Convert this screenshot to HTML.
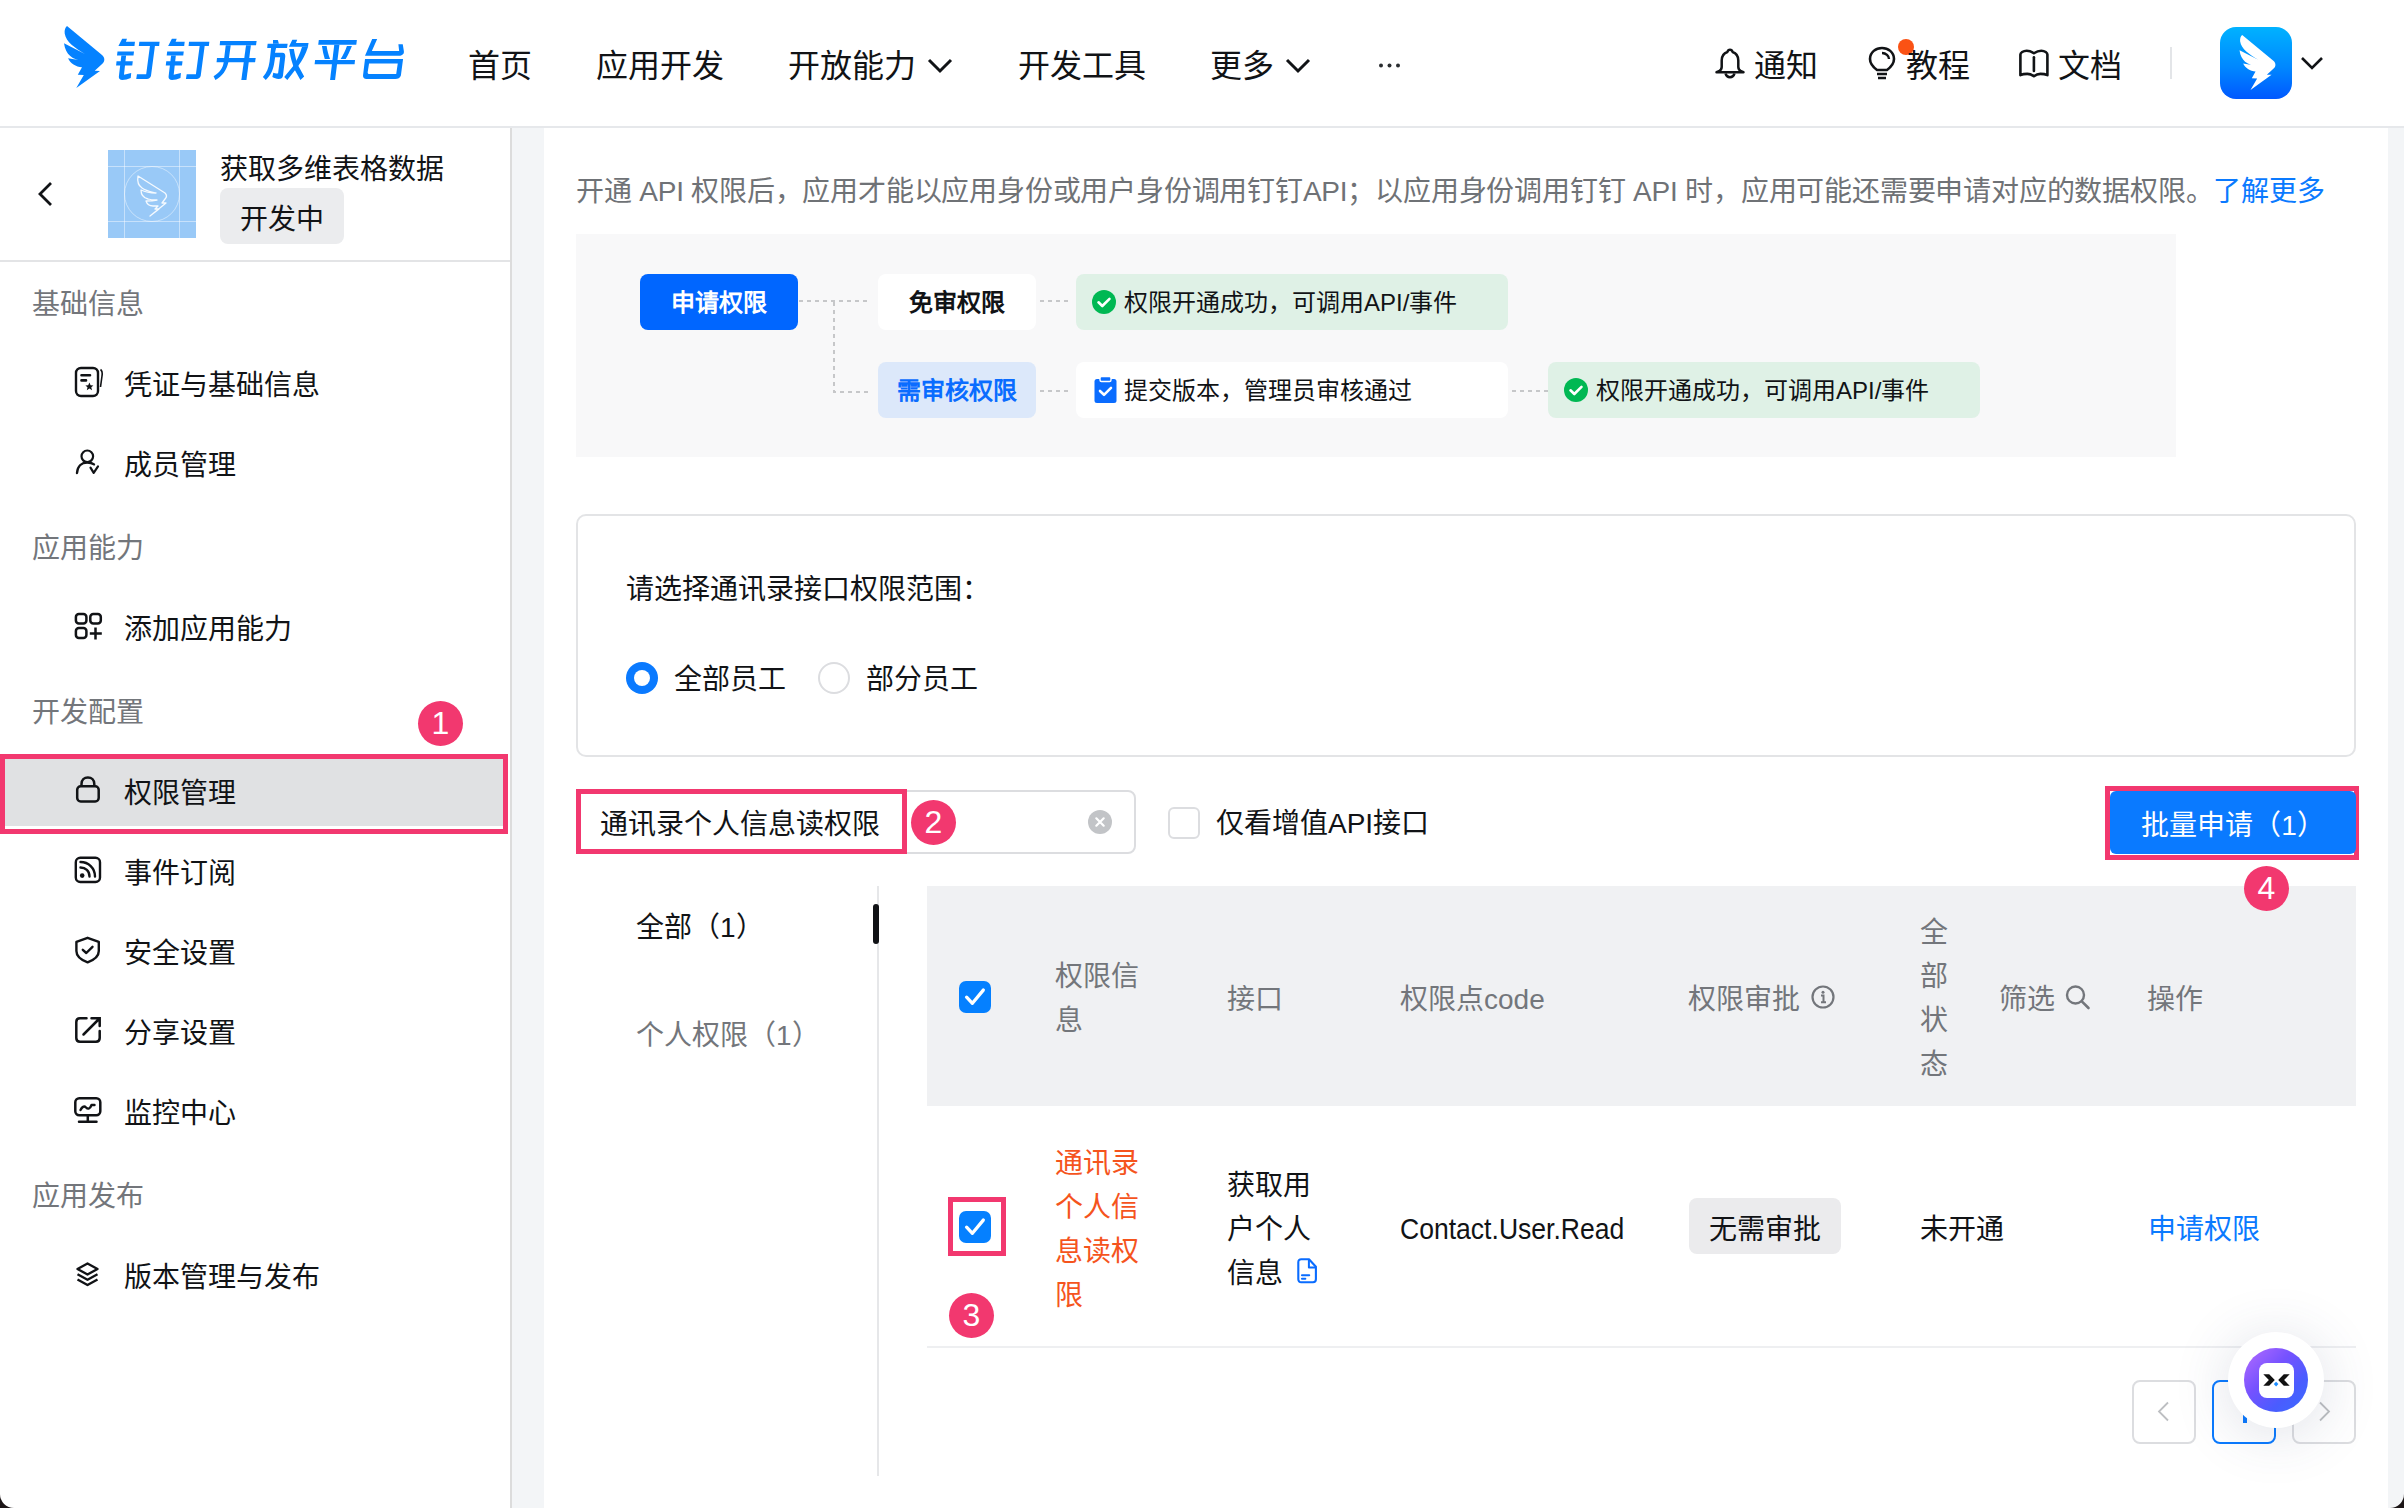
<!DOCTYPE html>
<html lang="zh-CN">
<head>
<meta charset="utf-8">
<style>
html,body{margin:0;padding:0;width:2404px;height:1508px;overflow:hidden;background:#fff;}
body{font-family:"Liberation Sans",sans-serif;color:#111316;position:relative;}
.a{position:absolute;white-space:nowrap;}
.t28{font-size:28px;line-height:46px;}
.t32{font-size:32px;line-height:44px;}
.gray{color:#73767b;}
svg{position:absolute;overflow:visible;}
.fl{font-size:24px;line-height:58px;}
.cbx{width:32px;height:32px;border-radius:7px;background:#0580ff;}
.bdg{width:45px;height:45px;border-radius:50%;background:#f2386f;color:#fff;font-size:32px;line-height:45px;text-align:center;}

</style>
</head>
<body>
<!-- HEADER -->
<div class="a" style="left:0;top:0;width:2404px;height:126px;background:#fff;"></div>
<div class="a" style="left:0;top:126px;width:2404px;height:2px;background:#e6e8eb;"></div>
<!-- logo -->
<svg style="left:0;top:0" width="120" height="100" viewBox="0 0 120 100"><path fill="#0582ff" d="M67 26 L102 55 C104.8 57.3 105.2 61 102.6 63.6 L94.7 70.8 L100 70.9 L76.3 88 L83.8 75 L77.8 74.7 L82 67.2 C76 67 70 63 68.1 58.2 L82.7 60.8 C73 60 65.5 55 64 43.3 L85 53.9 C75 48 66 42 64.7 33.5 C64.3 30 65.3 27.3 67 26 Z"/></svg>
<svg style="left:0;top:0" width="420" height="100" viewBox="0 0 420 100">
<g fill="#0582ff">
<path transform="translate(110 30) scale(0.062395)" d="M135 255 L195 140 L272 140 L255 190 L400 190 L392 255 Z"/>
<path transform="translate(110 30) scale(0.062395)" d="M120 345 L385 345 L377 410 L112 410 Z"/>
<path transform="translate(110 30) scale(0.062395)" d="M105 500 L365 500 L357 570 L97 570 Z"/>
<path transform="translate(110 30) scale(0.062395)" d="M182 410 L258 410 L224 718 L340 688 L332 768 C290 786 235 800 198 800 C160 800 138 778 142 745 Z"/>
<path transform="translate(110 30) scale(0.062395)" d="M470 190 L795 190 L787 258 L462 258 Z"/>
<path transform="translate(110 30) scale(0.062395)" d="M640 258 L720 258 L657 735 C650 765 625 785 590 785 L420 785 L432 710 L580 710 Z"/>
<path transform="translate(110 30) scale(0.062395) translate(797 0)" d="M135 255 L195 140 L272 140 L255 190 L400 190 L392 255 Z"/>
<path transform="translate(110 30) scale(0.062395) translate(797 0)" d="M120 345 L385 345 L377 410 L112 410 Z"/>
<path transform="translate(110 30) scale(0.062395) translate(797 0)" d="M105 500 L365 500 L357 570 L97 570 Z"/>
<path transform="translate(110 30) scale(0.062395) translate(797 0)" d="M182 410 L258 410 L224 718 L340 688 L332 768 C290 786 235 800 198 800 C160 800 138 778 142 745 Z"/>
<path transform="translate(110 30) scale(0.062395) translate(797 0)" d="M470 190 L795 190 L787 258 L462 258 Z"/>
<path transform="translate(110 30) scale(0.062395) translate(797 0)" d="M640 258 L720 258 L657 735 C650 765 625 785 590 785 L420 785 L432 710 L580 710 Z"/>
<path transform="translate(110 30) scale(0.062395)" d="M1765 178 L2350 178 L2340 243 L1758 243 Z"/>
<path transform="translate(110 30) scale(0.062395)" d="M1715 450 L2335 450 L2325 515 L1708 515 Z"/>
<path transform="translate(110 30) scale(0.062395)" d="M1855 243 L1935 243 L1897 515 C1870 640 1800 740 1690 800 L1660 740 C1760 680 1808 610 1822 515 Z"/>
<path transform="translate(110 30) scale(0.062395)" d="M2180 243 L2258 243 L2187 800 L2105 800 Z"/>
<path transform="translate(258 30) scale(0.062395)" d="M240 160 L318 160 L335 222 L240 222 Z"/>
<path transform="translate(258 30) scale(0.062395)" d="M155 222 L475 222 L465 290 L147 290 Z"/>
<path transform="translate(258 30) scale(0.062395)" d="M210 290 L290 290 L272 365 L390 365 C425 365 440 390 437 425 L400 735 C395 770 370 785 330 785 C290 785 260 770 230 755 L245 685 C270 692 295 700 322 692 L355 438 L275 438 L258 540 C240 650 200 730 125 800 L78 755 C140 690 170 610 185 510 Z"/>
<path transform="translate(258 30) scale(0.062395)" d="M550 158 L628 158 L608 210 L810 210 L800 270 L495 270 Z"/>
<path transform="translate(258 30) scale(0.062395)" d="M705 272 L805 262 C760 400 710 490 645 575 L470 800 L420 755 L565 578 C625 480 670 390 705 272 Z"/>
<path transform="translate(258 30) scale(0.062395)" d="M500 305 L575 305 C590 400 605 450 615 485 C625 530 640 570 650 580 L740 745 L680 800 L590 640 C560 570 540 500 520 420 Z"/>
<path transform="translate(258 30) scale(0.062395)" d="M975 160 L1585 160 L1575 238 L965 238 Z"/>
<path transform="translate(258 30) scale(0.062395)" d="M1025 255 L1100 255 C1110 330 1130 400 1155 465 L1070 465 C1050 400 1035 330 1025 255 Z"/>
<path transform="translate(258 30) scale(0.062395)" d="M1425 255 L1505 255 C1470 340 1440 410 1405 465 L1325 465 C1365 400 1400 330 1425 255 Z"/>
<path transform="translate(258 30) scale(0.062395)" d="M915 480 L1555 480 L1548 548 L907 548 Z"/>
<path transform="translate(258 30) scale(0.062395)" d="M1222 238 L1305 238 L1235 800 L1155 800 Z"/>
<path transform="translate(258 30) scale(0.062395)" d="M1830 145 L1910 145 L1825 338 L2262 338 L2250 228 L2320 228 L2338 340 C2345 385 2305 412 2262 412 L1715 412 Z"/>
<path transform="translate(258 30) scale(0.062395)" fill-rule="evenodd" d="M1715 465 L2325 465 L2290 730 C2280 770 2240 785 2200 785 L1740 785 C1700 785 1680 760 1683 730 Z M1780 535 L2240 535 L2215 705 L1785 705 C1765 705 1755 690 1758 672 Z"/>
</g></svg>

<div class="a t32" style="left:468px;top:44px;">首页</div>
<div class="a t32" style="left:596px;top:44px;">应用开发</div>
<div class="a t32" style="left:788px;top:44px;">开放能力</div>
<svg style="left:926px;top:56px" width="28" height="20" viewBox="0 0 28 20"><path d="M3 4 L14 15 L25 4" fill="none" stroke="#111316" stroke-width="3"/></svg>
<div class="a t32" style="left:1018px;top:44px;">开发工具</div>
<div class="a t32" style="left:1210px;top:44px;">更多</div>
<svg style="left:1284px;top:56px" width="28" height="20" viewBox="0 0 28 20"><path d="M3 4 L14 15 L25 4" fill="none" stroke="#111316" stroke-width="3"/></svg>
<svg style="left:1378px;top:62px" width="24" height="8" viewBox="0 0 24 8"><circle cx="3" cy="3.5" r="2" fill="#2a2d30"/><circle cx="11.5" cy="3.5" r="2" fill="#2a2d30"/><circle cx="20" cy="3.5" r="2" fill="#2a2d30"/></svg>

<!-- right header -->
<svg style="left:1714px;top:47px" width="32" height="34" viewBox="0 0 32 34"><path d="M16 2.8 C17.5 2.8 18.3 4 18.6 5 C22.5 6.3 24.3 9.6 24.3 13.5 L24.3 20 C24.3 22 25.5 23.3 27 24.2 L29.5 25.2 L2.5 25.2 L5 24.2 C6.5 23.3 7.7 22 7.7 20 L7.7 13.5 C7.7 9.6 9.5 6.3 13.4 5 C13.7 4 14.5 2.8 16 2.8 Z" fill="none" stroke="#111316" stroke-width="2.5" stroke-linejoin="round"/><path d="M11.5 26.5 C12.2 29 14 30.3 16 30.3 C18 30.3 19.8 29 20.5 26.5" fill="none" stroke="#111316" stroke-width="2.5"/></svg>
<div class="a t32" style="left:1754px;top:44px;">通知</div>
<svg style="left:1868px;top:46px" width="30" height="34" viewBox="0 0 30 34"><path d="M9 24 C5 21 2 17 2 13 C2 6 8 2 14 2 C20 2 26 6 26 13 C26 17 23 21 19 24 Z" fill="none" stroke="#111316" stroke-width="2.6" stroke-linejoin="round"/><path d="M14 7 C18 7 21 10 21 13" fill="none" stroke="#111316" stroke-width="2.4"/><path d="M9 28 L19 28 M10 32 L18 32" stroke="#111316" stroke-width="2.6"/></svg>
<div class="a" style="left:1898px;top:39px;width:16px;height:16px;border-radius:8px;background:#fa5214;"></div>
<div class="a t32" style="left:1906px;top:44px;">教程</div>
<svg style="left:2018px;top:49px" width="32" height="30" viewBox="0 0 32 30"><path d="M2.4 26.2 L2.4 5.5 C2.4 4 5 1.7 8.7 1.7 C11.5 1.7 14 3 15.9 4.3 C17.8 3 20.5 1.7 23.3 1.7 C27 1.7 29.4 4 29.4 5.5 L29.4 26.2 C27.5 25.3 25 24.9 22.4 24.9 C19.8 24.9 17.5 26 15.9 27.2 C14.3 26 12 24.9 9.3 24.9 C6.7 24.9 4.3 25.3 2.4 26.2 Z" fill="none" stroke="#111316" stroke-width="2.6" stroke-linejoin="round"/><path d="M15.9 8.3 L15.9 22" stroke="#111316" stroke-width="2.6" stroke-linecap="round"/></svg>
<div class="a t32" style="left:2058px;top:44px;">文档</div>
<div class="a" style="left:2170px;top:47px;width:2px;height:32px;background:#e3e5e8;"></div>
<div class="a" style="left:2220px;top:27px;width:72px;height:72px;border-radius:16px;background:linear-gradient(180deg,#00b2ff 0%,#0088ff 55%,#0058ff 100%);"></div>
<svg style="left:2200px;top:0" width="120" height="100" viewBox="0 0 120 100"><path fill="#fff" transform="translate(42.2 34.9) scale(0.89) translate(-67 -26)" d="M67 26 L102 55 C104.8 57.3 105.2 61 102.6 63.6 L94.7 70.8 L100 70.9 L76.3 88 L83.8 75 L77.8 74.7 L82 67.2 C76 67 70 63 68.1 58.2 L82.7 60.8 C73 60 65.5 55 64 43.3 L85 53.9 C75 48 66 42 64.7 33.5 C64.3 30 65.3 27.3 67 26 Z"/></svg>
<svg style="left:2300px;top:55px" width="24" height="18" viewBox="0 0 24 18"><path d="M2 3 L12 13 L22 3" fill="none" stroke="#111316" stroke-width="2.6"/></svg>


<!-- SIDEBAR -->
<div class="a" style="left:510px;top:128px;width:2px;height:1380px;background:#dcdcdc;"></div>
<div class="a" style="left:512px;top:128px;width:32px;height:1380px;background:#f3f5f7;"></div>
<div class="a" style="left:2388px;top:128px;width:16px;height:1380px;background:#f3f5f7;"></div>


<!-- SIDEBAR CONTENT -->
<div class="a" style="left:4px;top:758px;width:500px;height:68px;background:#e0e1e3;"></div>
<div class="a" style="left:0;top:754px;width:498px;height:70px;border:5px solid #f2386f;"></div>

<!-- sidebar icons -->
<svg style="left:74px;top:366px" width="32" height="32" viewBox="0 0 32 32"><rect x="2" y="2" width="22" height="28" rx="5" fill="none" stroke="#111316" stroke-width="2.4"/><path d="M7.5 9.3 L16 9.3 M7.5 14.4 L12 14.4" stroke="#111316" stroke-width="2.6" stroke-linecap="round"/><path d="M15.4 16.5 L16.6 19.3 L19.4 19.5 L17.3 21.3 L18 24.2 L15.4 22.6 L12.8 24.2 L13.5 21.3 L11.4 19.5 L14.2 19.3 Z" fill="#111316"/><path d="M26.5 3.5 C28.5 5 28.5 7 28 10 L26.5 21" fill="none" stroke="#111316" stroke-width="1.6"/></svg>
<svg style="left:74px;top:448px" width="32" height="30" viewBox="0 0 32 30"><circle cx="13.3" cy="8.3" r="5.8" fill="none" stroke="#111316" stroke-width="2.2"/><path d="M3 25 C3.5 18 8 14.5 13.3 14.5 C16 14.5 18.5 15.3 20 16.4" fill="none" stroke="#111316" stroke-width="2.4" stroke-linecap="round"/><path d="M16.5 19.6 L19.7 24.8 L24 18.4" fill="none" stroke="#111316" stroke-width="2.2" stroke-linecap="round" stroke-linejoin="round"/></svg>
<svg style="left:74px;top:612px" width="30" height="30" viewBox="0 0 30 30"><rect x="1.9" y="1.9" width="10.5" height="9.5" rx="3" fill="none" stroke="#111316" stroke-width="2.5"/><rect x="16.3" y="1.9" width="10.5" height="9.5" rx="3" fill="none" stroke="#111316" stroke-width="2.5"/><rect x="1.9" y="16.1" width="10.5" height="9.8" rx="3" fill="none" stroke="#111316" stroke-width="2.5"/><path d="M21.5 15.5 L21.5 27.5 M15.8 21.5 L27.8 21.5" stroke="#111316" stroke-width="2.5"/></svg>
<svg style="left:75px;top:776px" width="26" height="28" viewBox="0 0 26 28"><rect x="2.2" y="10.3" width="21.5" height="15.2" rx="3.5" fill="none" stroke="#111316" stroke-width="2.5"/><path d="M6.5 10.3 L6.5 8 C6.5 4 9.3 1.5 12.9 1.5 C16.5 1.5 19.3 4 19.3 8 L19.3 10.3" fill="none" stroke="#111316" stroke-width="2.5"/></svg>
<svg style="left:74px;top:856px" width="28" height="28" viewBox="0 0 28 28"><rect x="1.8" y="1.8" width="24.2" height="24.2" rx="4.5" fill="none" stroke="#111316" stroke-width="2.4"/><circle cx="8.2" cy="19.6" r="2.3" fill="#111316"/><path d="M6.5 11.5 C11.5 11.5 15.5 15 15.5 20.5" fill="none" stroke="#111316" stroke-width="2.4" stroke-linecap="round"/><path d="M6.5 6 C14.5 6 21 12 21 20.5" fill="none" stroke="#111316" stroke-width="2.4" stroke-linecap="round"/></svg>
<svg style="left:75px;top:936px" width="28" height="28" viewBox="0 0 28 28"><path d="M12.6 1.8 L23.8 5.8 L23.8 15 C23.8 20 19 24 12.6 26.3 C6.2 24 1.4 20 1.4 15 L1.4 5.8 Z" fill="none" stroke="#111316" stroke-width="2.4" stroke-linejoin="round"/><path d="M7.8 13.8 L11.3 17 L17.5 10.8" fill="none" stroke="#111316" stroke-width="2.4" stroke-linecap="round" stroke-linejoin="round"/></svg>
<svg style="left:74px;top:1016px" width="28" height="28" viewBox="0 0 28 28"><path d="M12.5 2.3 L6 2.3 C3.8 2.3 2.3 3.8 2.3 6 L2.3 22 C2.3 24.2 3.8 25.7 6 25.7 L22 25.7 C24.2 25.7 25.7 24.2 25.7 22 L25.7 15" fill="none" stroke="#111316" stroke-width="2.5" stroke-linecap="round"/><path d="M9.5 18.5 L24.5 3.5 M17.5 2.3 L25.7 2.3 L25.7 10" fill="none" stroke="#111316" stroke-width="2.5" stroke-linecap="round"/></svg>
<svg style="left:73px;top:1096px" width="30" height="28" viewBox="0 0 30 28"><rect x="2.3" y="2.3" width="25" height="17" rx="4" fill="none" stroke="#111316" stroke-width="2.5"/><path d="M7.5 14 C9 11 11 9.5 13 11.5 C15 13.5 17 13 18.5 9 L21.5 9" fill="none" stroke="#111316" stroke-width="2.4" stroke-linecap="round" stroke-linejoin="round"/><path d="M14.8 19.5 L14.8 25 M6 25.8 L23.5 25.8" stroke="#111316" stroke-width="2.5" stroke-linecap="round"/></svg>
<svg style="left:76px;top:1262px" width="24" height="24" viewBox="0 0 24 24"><path d="M11.5 1.5 L21.5 7 L11.5 12.5 L1.5 7 Z" fill="none" stroke="#111316" stroke-width="2.4" stroke-linejoin="round"/><path d="M1.5 12.3 L11.5 17.8 L21.5 12.3 M1.5 17.5 L11.5 23 L21.5 17.5" fill="none" stroke="#111316" stroke-width="2.4" stroke-linejoin="round"/></svg>

<svg style="left:36px;top:181px" width="18" height="26" viewBox="0 0 18 26"><path d="M15 2 L4 13 L15 24" fill="none" stroke="#111316" stroke-width="2.8"/></svg>
<div class="a" style="left:108px;top:150px;width:88px;height:88px;background:#99c9f7;overflow:hidden;">
 <div class="a" style="left:16px;top:0;width:1px;height:88px;background:rgba(255,255,255,.45)"></div>
 <div class="a" style="left:71px;top:0;width:1px;height:88px;background:rgba(255,255,255,.45)"></div>
 <div class="a" style="left:0;top:16px;width:88px;height:1px;background:rgba(255,255,255,.45)"></div>
 <div class="a" style="left:0;top:71px;width:88px;height:1px;background:rgba(255,255,255,.45)"></div>
 <div class="a" style="left:16px;top:16px;width:54px;height:54px;border-radius:50%;border:1px solid rgba(255,255,255,.45)"></div>
 <svg style="left:28px;top:24px" width="34" height="42" viewBox="0 0 34 42"><path d="M2 2 C1 8 3 12 6 14 C10 17 16 18 20 19 C14 19 9 18 5 16 C5 21 8 24 12 25 C15 26 18 26 21 26 C17 27 13 27 10 27 C11 30 14 32 17 32 L22 32 L19 35 L23 35 L14 42 L30 29 L26 29 L29 25 C31 23 31 21 29 19 Z" fill="none" stroke="rgba(255,255,255,.9)" stroke-width="1.3" stroke-linejoin="round"/></svg>
</div>
<div class="a t28" style="left:220px;top:147px;">获取多维表格数据</div>
<div class="a" style="left:220px;top:188px;width:124px;height:56px;border-radius:8px;background:#ebecee;"></div>
<div class="a t28" style="left:240px;top:197px;">开发中</div>
<div class="a" style="left:0;top:260px;width:510px;height:2px;background:#e3e4e6;"></div>

<div class="a t28 gray" style="left:32px;top:282px;">基础信息</div>
<div class="a t28" style="left:124px;top:363px;">凭证与基础信息</div>
<div class="a t28" style="left:124px;top:443px;">成员管理</div>
<div class="a t28 gray" style="left:32px;top:526px;">应用能力</div>
<div class="a t28" style="left:124px;top:607px;">添加应用能力</div>
<div class="a t28 gray" style="left:32px;top:690px;">开发配置</div>
<div class="a t28" style="left:124px;top:771px;">权限管理</div>
<div class="a t28" style="left:124px;top:851px;">事件订阅</div>
<div class="a t28" style="left:124px;top:931px;">安全设置</div>
<div class="a t28" style="left:124px;top:1011px;">分享设置</div>
<div class="a t28" style="left:124px;top:1091px;">监控中心</div>
<div class="a t28 gray" style="left:32px;top:1174px;">应用发布</div>
<div class="a t28" style="left:124px;top:1255px;">版本管理与发布</div>

<div class="a" style="left:418px;top:701px;width:45px;height:45px;border-radius:50%;background:#f2386f;color:#fff;font-size:32px;line-height:45px;text-align:center;">1</div>

<!-- MAIN -->
<div class="a t28" style="left:576px;top:169px;color:#6f7276;letter-spacing:-0.2px;">开通 API 权限后，应用才能以应用身份或用户身份调用钉钉API；以应用身份调用钉钉 API 时，应用可能还需要申请对应的数据权限。<span style="color:#0a7aff">了解更多</span></div>

<!-- flow -->
<div class="a" style="left:576px;top:234px;width:1600px;height:223px;background:#f8f8f9;"></div>
<div class="a" style="left:640px;top:274px;width:158px;height:56px;border-radius:8px;background:#0066ff;"></div>
<div class="a fl" style="left:640px;top:274px;width:158px;color:#fff;font-weight:700;text-align:center;">申请权限</div>
<div class="a" style="left:878px;top:274px;width:158px;height:56px;border-radius:8px;background:#fff;"></div>
<div class="a fl" style="left:878px;top:274px;width:158px;font-weight:700;text-align:center;">免审权限</div>
<div class="a" style="left:1076px;top:274px;width:432px;height:56px;border-radius:8px;background:#dff1e6;"></div>
<svg style="left:1092px;top:290px" width="24" height="24" viewBox="0 0 24 24"><circle cx="12" cy="12" r="12" fill="#00b853"/><path d="M6.5 12.3 L10.3 16 L17.5 8.8" fill="none" stroke="#fff" stroke-width="2.6" stroke-linecap="round" stroke-linejoin="round"/></svg>
<div class="a fl" style="left:1124px;top:274px;">权限开通成功，可调用API/事件</div>
<div class="a" style="left:878px;top:362px;width:158px;height:56px;border-radius:8px;background:#dce8fa;"></div>
<div class="a fl" style="left:878px;top:362px;width:158px;font-weight:700;text-align:center;color:#0a6cff;">需审核权限</div>
<div class="a" style="left:1076px;top:362px;width:432px;height:56px;border-radius:8px;background:#fff;"></div>
<svg style="left:1094px;top:376px" width="24" height="28" viewBox="0 0 24 28"><rect x="0.5" y="3" width="22" height="24" rx="2.5" fill="#0a6cff"/><rect x="6" y="0.5" width="11" height="5" rx="1.5" fill="#0a6cff" stroke="#fff" stroke-width="1.4"/><path d="M6 15 L10 18.8 L17 11.8" fill="none" stroke="#fff" stroke-width="2.6" stroke-linecap="round" stroke-linejoin="round"/></svg>
<div class="a fl" style="left:1124px;top:362px;">提交版本，管理员审核通过</div>
<div class="a" style="left:1548px;top:362px;width:432px;height:56px;border-radius:8px;background:#dff1e6;"></div>
<svg style="left:1564px;top:378px" width="24" height="24" viewBox="0 0 24 24"><circle cx="12" cy="12" r="12" fill="#00b853"/><path d="M6.5 12.3 L10.3 16 L17.5 8.8" fill="none" stroke="#fff" stroke-width="2.6" stroke-linecap="round" stroke-linejoin="round"/></svg>
<div class="a fl" style="left:1596px;top:362px;">权限开通成功，可调用API/事件</div>
<svg style="left:798px;top:296px" width="760" height="100" viewBox="0 0 760 100">
<g stroke="#c6c7c9" stroke-width="2" stroke-dasharray="4 4" fill="none">
<path d="M1 5 L72 5"/><path d="M36 6 L36 96 L72 96"/>
<path d="M242 5 L274 5"/><path d="M242 95 L274 95"/><path d="M714 95 L750 95"/>
</g></svg>

<!-- scope card -->
<div class="a" style="left:576px;top:514px;width:1776px;height:239px;border:2px solid #e3e4e6;border-radius:10px;"></div>
<div class="a t28" style="left:626px;top:567px;">请选择通讯录接口权限范围：</div>
<div class="a" style="left:626px;top:662px;width:32px;height:32px;border-radius:50%;background:#0a7aff;"></div>
<div class="a" style="left:634px;top:670px;width:16px;height:16px;border-radius:50%;background:#fff;"></div>
<div class="a t28" style="left:674px;top:657px;">全部员工</div>
<div class="a" style="left:818px;top:662px;width:28px;height:28px;border-radius:50%;border:2px solid #dcdde0;"></div>
<div class="a t28" style="left:866px;top:657px;">部分员工</div>

<!-- search row -->
<div class="a" style="left:576px;top:790px;width:556px;height:60px;border:2px solid #dcdde0;border-radius:8px;"></div>
<div class="a t28" style="left:600px;top:802px;">通讯录个人信息读权限</div>
<div class="a" style="left:576px;top:789px;width:321px;height:55px;border:5px solid #f2386f;"></div>
<svg style="left:1088px;top:810px" width="24" height="24" viewBox="0 0 24 24"><circle cx="12" cy="12" r="12" fill="#c2c4c7"/><path d="M8.3 8.3 L15.7 15.7 M15.7 8.3 L8.3 15.7" stroke="#fff" stroke-width="2.2" stroke-linecap="round"/></svg>
<div class="a" style="left:1168px;top:807px;width:28px;height:28px;border:2px solid #dcdde0;border-radius:6px;"></div>
<div class="a t28" style="left:1216px;top:801px;">仅看增值API接口</div>
<div class="a" style="left:2105px;top:786px;width:244px;height:64px;border:5px solid #f2386f;"></div>
<div class="a" style="left:2110px;top:791px;width:246px;height:63px;border-radius:6px;background:#0a7aff;"></div>
<div class="a t28" style="left:2110px;top:803px;width:246px;text-align:center;color:#fff;">批量申请（1）</div>

<!-- left tabs -->
<div class="a" style="left:877px;top:886px;width:2px;height:590px;background:#e6e7e9;"></div>
<div class="a" style="left:873px;top:904px;width:6px;height:40px;border-radius:3px;background:#111316;"></div>
<div class="a t28" style="left:636px;top:905px;">全部（1）</div>
<div class="a t28 gray" style="left:636px;top:1013px;">个人权限（1）</div>

<!-- table header -->
<div class="a" style="left:927px;top:886px;width:1429px;height:220px;background:#f0f1f3;"></div>
<div class="a cbx" style="left:959px;top:981px;"><svg style="left:0;top:0" width="32" height="32" viewBox="0 0 32 32"><path d="M7.6 16.2 L13.4 22.3 L24.3 9.1" fill="none" stroke="#fff" stroke-width="3.3" stroke-linecap="round" stroke-linejoin="round"/></svg></div>
<div class="a t28 gray" style="left:1055px;top:955px;line-height:44px;">权限信<br>息</div>
<div class="a t28 gray" style="left:1227px;top:977px;">接口</div>
<div class="a t28 gray" style="left:1400px;top:977px;">权限点code</div>
<div class="a t28 gray" style="left:1688px;top:977px;">权限审批</div>
<svg style="left:1810px;top:984px" width="26" height="26" viewBox="0 0 26 26"><circle cx="13" cy="13" r="10.5" fill="none" stroke="#73767b" stroke-width="2.2"/><circle cx="13" cy="8.3" r="1.5" fill="#73767b"/><path d="M11 11.5 L13.5 11.5 L13.5 18.3 M11 18.3 L16 18.3" fill="none" stroke="#73767b" stroke-width="2"/></svg>
<div class="a t28 gray" style="left:1920px;top:911px;line-height:44px;white-space:normal;width:30px;">全<br>部<br>状<br>态</div>
<div class="a t28 gray" style="left:1999px;top:977px;">筛选</div>
<svg style="left:2064px;top:984px" width="28" height="28" viewBox="0 0 28 28"><circle cx="11.5" cy="11" r="8.5" fill="none" stroke="#73767b" stroke-width="2.4"/><path d="M17.8 17.3 L24.5 24" stroke="#73767b" stroke-width="2.6" stroke-linecap="round"/></svg>
<div class="a t28 gray" style="left:2147px;top:977px;">操作</div>

<!-- table row -->
<div class="a cbx" style="left:959px;top:1211px;"><svg style="left:0;top:0" width="32" height="32" viewBox="0 0 32 32"><path d="M7.6 16.2 L13.4 22.3 L24.3 9.1" fill="none" stroke="#fff" stroke-width="3.3" stroke-linecap="round" stroke-linejoin="round"/></svg></div>
<div class="a" style="left:948px;top:1197px;width:48px;height:49px;border:5px solid #f2386f;"></div>
<div class="a t28" style="left:1055px;top:1142px;line-height:44px;color:#f5541d;">通讯录<br>个人信<br>息读权<br>限</div>
<div class="a t28" style="left:1227px;top:1164px;line-height:44px;">获取用<br>户个人<br>信息</div>
<svg style="left:1295px;top:1257px" width="24" height="28" viewBox="0 0 24 28"><path d="M3.3 5.2 C3.3 3.5 4.5 2.3 6.2 2.3 L14 2.3 L20.9 9.8 L20.9 22.3 C20.9 24 19.7 25.2 18 25.2 L6.2 25.2 C4.5 25.2 3.3 24 3.3 22.3 Z" fill="none" stroke="#0a6cff" stroke-width="2.1" stroke-linejoin="round"/><path d="M13.9 2.3 L13.9 10.5 L20.9 10.5" fill="none" stroke="#0a6cff" stroke-width="2" stroke-linejoin="round"/><path d="M7 18.3 L14.2 18.3 M7 21.8 L10.3 21.8" stroke="#0a6cff" stroke-width="2.1" stroke-linecap="round"/></svg>
<div class="a" style="left:1400px;top:1206px;font-size:30px;line-height:46px;transform:scaleX(0.885);transform-origin:0 0;">Contact.User.Read</div>
<div class="a" style="left:1689px;top:1198px;width:152px;height:56px;border-radius:8px;background:#ebebed;"></div>
<div class="a t28" style="left:1689px;top:1207px;width:152px;text-align:center;">无需审批</div>
<div class="a t28" style="left:1920px;top:1207px;">未开通</div>
<div class="a t28" style="left:2148px;top:1207px;color:#0a7aff;">申请权限</div>
<div class="a" style="left:927px;top:1346px;width:1429px;height:2px;background:#eeeff1;"></div>

<!-- pagination -->
<div class="a" style="left:2132px;top:1380px;width:60px;height:60px;border:2px solid #dcdde0;border-radius:8px;"></div>
<svg style="left:2154px;top:1400px" width="20" height="24" viewBox="0 0 20 24"><path d="M14 2.5 L5 11.5 L14 20.5" fill="none" stroke="#bdbfc2" stroke-width="1.8"/></svg>
<div class="a" style="left:2212px;top:1380px;width:60px;height:60px;border:2px solid #0a7aff;border-radius:8px;"></div>
<div class="a" style="left:2243px;top:1412px;width:4px;height:11px;background:#0a7aff;"></div>
<div class="a" style="left:2292px;top:1380px;width:60px;height:60px;border:2px solid #dcdde0;border-radius:8px;"></div>
<svg style="left:2314px;top:1400px" width="20" height="24" viewBox="0 0 20 24"><path d="M6 2.5 L15 11.5 L6 20.5" fill="none" stroke="#bdbfc2" stroke-width="1.8"/></svg>

<!-- float btn -->
<div class="a" style="left:2228px;top:1332px;width:96px;height:96px;border-radius:50%;background:#fff;box-shadow:0 6px 56px rgba(60,70,110,.17);"></div>
<div class="a" style="left:2244px;top:1348px;width:64px;height:64px;border-radius:50%;background:linear-gradient(135deg,#b66cff 0%,#7552ff 40%,#4a5cff 70%,#3a6cff 100%);"></div>
<div class="a" style="left:2259px;top:1363px;width:35px;height:35px;border-radius:8px;background:#fff;"></div>
<svg style="left:2259px;top:1363px" width="35" height="35" viewBox="0 0 35 35"><path d="M4.3 11.2 L10.2 11.2 L15.8 17 L10.2 22.8 L4.3 22.8 L9.9 17 Z" fill="#111"/><path d="M30.7 11.2 L24.8 11.2 L19.2 17 L24.8 22.8 L30.7 22.8 L25.1 17 Z" fill="#111"/><path d="M17.1 18.8 L19.4 21.1 L17.1 23.4 L14.8 21.1 Z" fill="#1a8cff"/></svg>

<!-- badges -->
<div class="a bdg" style="left:911px;top:800px;">2</div>
<div class="a bdg" style="left:949px;top:1293px;">3</div>
<div class="a bdg" style="left:2244px;top:866px;">4</div>

<!-- window corners -->
<div class="a" style="left:0;top:0;width:2404px;height:1508px;border-radius:0 0 14px 14px;box-shadow:0 0 0 40px #1c1617;pointer-events:none;"></div>
</body>
</html>
